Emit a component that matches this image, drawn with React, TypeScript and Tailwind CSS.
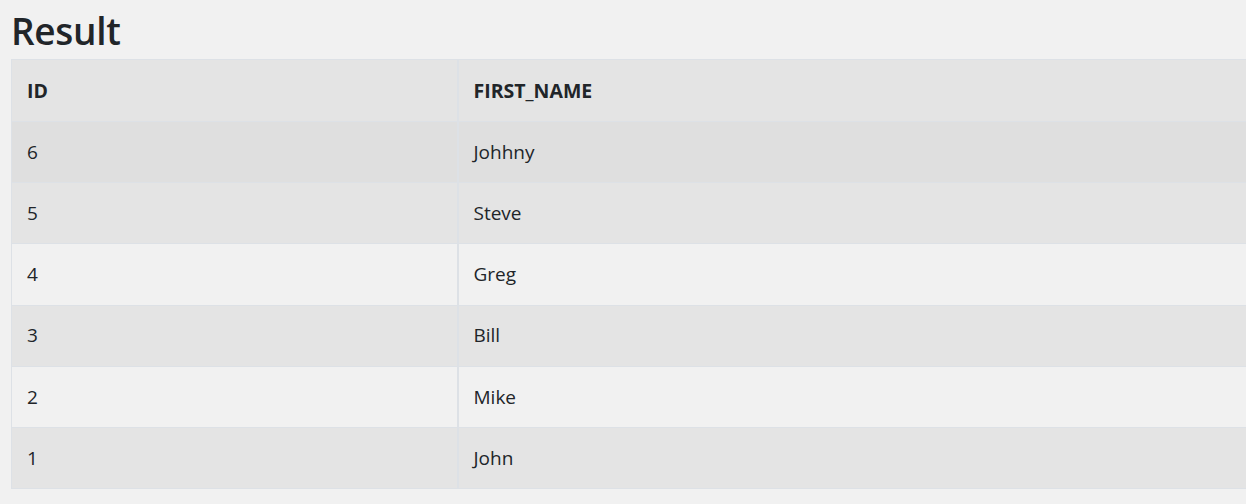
const rows = [
  { id: 6, name: 'Johhny', bg: 'bg-[#dfdfdf]' },
  { id: 5, name: 'Steve', bg: 'bg-[#e4e4e4]' },
  { id: 4, name: 'Greg', bg: 'bg-[#f1f1f1]' },
  { id: 3, name: 'Bill', bg: 'bg-[#e4e4e4]' },
  { id: 2, name: 'Mike', bg: 'bg-[#f1f1f1]' },
  { id: 1, name: 'John', bg: 'bg-[#e4e4e4]' },
]

export default function App() {
  return (
    <div
      className="min-h-screen w-full overflow-hidden bg-[#f1f1f1] text-[#212529]"
      style={{ fontFamily: '"Open Sans", "Noto Sans", sans-serif' }}
    >
      <h1 className="pl-[11px] pt-[3px] text-[37px] font-semibold leading-[56px] tracking-[-0.3px]">Result</h1>
      <table className="ml-[11px] w-[calc(100%-11px)] border-collapse text-[19px]">
        <thead>
          <tr className="bg-[#e4e4e4] text-[19.5px]">
            <th className="h-[62px] w-[446px] border border-r-2 border-[#dde1e6] px-[15px] text-left font-bold">ID</th>
            <th className="h-[62px] border-y border-[#dde1e6] px-[15px] text-left font-bold">FIRST_NAME</th>
          </tr>
        </thead>
        <tbody>
          {rows.map((r) => (
            <tr key={r.id} className={r.bg}>
              <td className="h-[61.2px] border border-r-2 border-[#dde1e6] px-[15px]">{r.id}</td>
              <td className="h-[61.2px] border-y border-[#dde1e6] px-[15px]">{r.name}</td>
            </tr>
          ))}
        </tbody>
      </table>
    </div>
  )
}
